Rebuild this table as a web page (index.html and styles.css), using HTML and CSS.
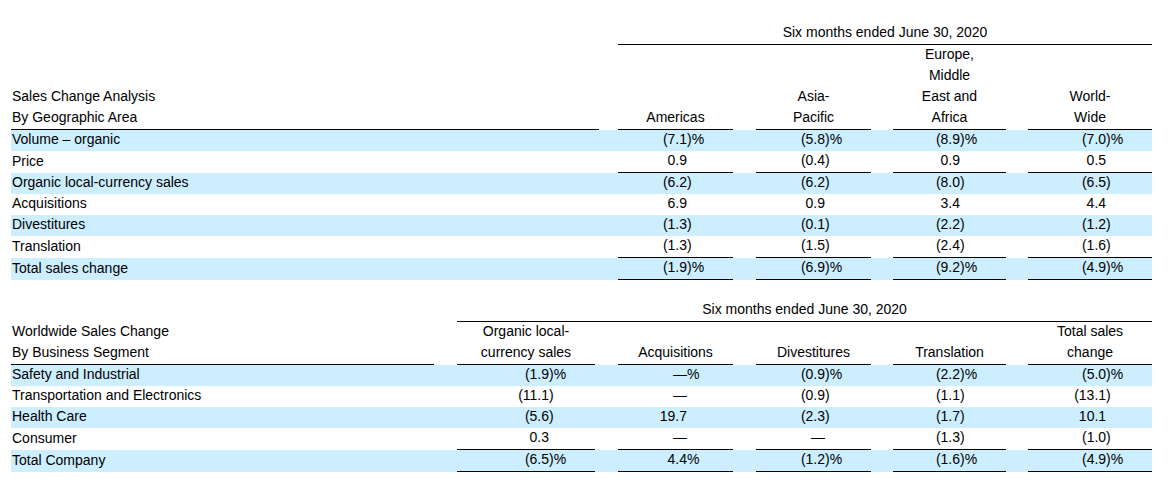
FILE: index.html
```html
<!DOCTYPE html>
<html lang="en">
<head>
<meta charset="utf-8">
<title>Sales Change Analysis</title>
<link rel="stylesheet" href="styles.css">
</head>
<body>
<div class="page">
  <table class="tbl t1">
    <colgroup>
      <col class="c-lab1"><col class="c-sp19"><col class="c-115"><col class="c-sp23"><col class="c-115"><col class="c-sp22"><col class="c-113"><col class="c-sp22"><col class="c-124">
    </colgroup>
    <tr>
      <td></td><td></td>
      <td colspan="7" class="title bb">Six months ended June 30, 2020</td>
    </tr>
    <tr>
      <td class="lab hdl bb"><div class="hx">Sales Change Analysis<br>By Geographic Area</div></td>
      <td></td>
      <td class="hd bb"><div class="hx">Americas</div></td>
      <td></td>
      <td class="hd bb"><div class="hx">Asia-<br>Pacific</div></td>
      <td></td>
      <td class="hd bb"><div class="hx">Europe,<br>Middle<br>East and<br>Africa</div></td>
      <td></td>
      <td class="hd bb"><div class="hx">World-<br>Wide</div></td>
    </tr>
    <tr class="hl">
      <td class="lab">Volume – organic</td><td></td>
      <td class="v"><span class="n">(7.1</span><span class="s">)%</span></td><td></td>
      <td class="v"><span class="n">(5.8</span><span class="s">)%</span></td><td></td>
      <td class="v"><span class="n">(8.9</span><span class="s">)%</span></td><td></td>
      <td class="v"><span class="n">(7.0</span><span class="s">)%</span></td>
    </tr>
    <tr>
      <td class="lab">Price</td><td></td>
      <td class="v bb"><span class="n">0.9</span><span class="s"></span></td><td></td>
      <td class="v bb"><span class="n">(0.4</span><span class="s">)</span></td><td></td>
      <td class="v bb"><span class="n">0.9</span><span class="s"></span></td><td></td>
      <td class="v bb"><span class="n">0.5</span><span class="s"></span></td>
    </tr>
    <tr class="hl">
      <td class="lab">Organic local-currency sales</td><td></td>
      <td class="v"><span class="n">(6.2</span><span class="s">)</span></td><td></td>
      <td class="v"><span class="n">(6.2</span><span class="s">)</span></td><td></td>
      <td class="v"><span class="n">(8.0</span><span class="s">)</span></td><td></td>
      <td class="v"><span class="n">(6.5</span><span class="s">)</span></td>
    </tr>
    <tr>
      <td class="lab">Acquisitions</td><td></td>
      <td class="v"><span class="n">6.9</span><span class="s"></span></td><td></td>
      <td class="v"><span class="n">0.9</span><span class="s"></span></td><td></td>
      <td class="v"><span class="n">3.4</span><span class="s"></span></td><td></td>
      <td class="v"><span class="n">4.4</span><span class="s"></span></td>
    </tr>
    <tr class="hl">
      <td class="lab">Divestitures</td><td></td>
      <td class="v"><span class="n">(1.3</span><span class="s">)</span></td><td></td>
      <td class="v"><span class="n">(0.1</span><span class="s">)</span></td><td></td>
      <td class="v"><span class="n">(2.2</span><span class="s">)</span></td><td></td>
      <td class="v"><span class="n">(1.2</span><span class="s">)</span></td>
    </tr>
    <tr>
      <td class="lab">Translation</td><td></td>
      <td class="v bb"><span class="n">(1.3</span><span class="s">)</span></td><td></td>
      <td class="v bb"><span class="n">(1.5</span><span class="s">)</span></td><td></td>
      <td class="v bb"><span class="n">(2.4</span><span class="s">)</span></td><td></td>
      <td class="v bb"><span class="n">(1.6</span><span class="s">)</span></td>
    </tr>
    <tr class="hl">
      <td class="lab">Total sales change</td><td></td>
      <td class="v bb"><span class="n">(1.9</span><span class="s">)%</span></td><td></td>
      <td class="v bb"><span class="n">(6.9</span><span class="s">)%</span></td><td></td>
      <td class="v bb"><span class="n">(9.2</span><span class="s">)%</span></td><td></td>
      <td class="v bb"><span class="n">(4.9</span><span class="s">)%</span></td>
    </tr>
  </table>

  <table class="tbl t2">
    <colgroup>
      <col class="c-lab2"><col class="c-sp23"><col class="c-138"><col class="c-sp23"><col class="c-115"><col class="c-sp23"><col class="c-115"><col class="c-sp22"><col class="c-113"><col class="c-sp22"><col class="c-124">
    </colgroup>
    <tr>
      <td></td><td></td>
      <td colspan="9" class="title bb">Six months ended June 30, 2020</td>
    </tr>
    <tr>
      <td class="lab hdl bb"><div class="hx">Worldwide Sales Change<br>By Business Segment</div></td>
      <td></td>
      <td class="hd bb"><div class="hx">Organic local-<br>currency sales</div></td>
      <td></td>
      <td class="hd bb"><div class="hx">Acquisitions</div></td>
      <td></td>
      <td class="hd bb"><div class="hx">Divestitures</div></td>
      <td></td>
      <td class="hd bb"><div class="hx">Translation</div></td>
      <td></td>
      <td class="hd bb"><div class="hx">Total sales<br>change</div></td>
    </tr>
    <tr class="hl">
      <td class="lab">Safety and Industrial</td><td></td>
      <td class="v"><span class="n">(1.9</span><span class="s">)%</span></td><td></td>
      <td class="v"><span class="n">—</span><span class="s">%</span></td><td></td>
      <td class="v"><span class="n">(0.9</span><span class="s">)%</span></td><td></td>
      <td class="v"><span class="n">(2.2</span><span class="s">)%</span></td><td></td>
      <td class="v"><span class="n">(5.0</span><span class="s">)%</span></td>
    </tr>
    <tr>
      <td class="lab">Transportation and Electronics</td><td></td>
      <td class="v"><span class="n">(11.1</span><span class="s">)</span></td><td></td>
      <td class="v"><span class="n">—</span><span class="s"></span></td><td></td>
      <td class="v"><span class="n">(0.9</span><span class="s">)</span></td><td></td>
      <td class="v"><span class="n">(1.1</span><span class="s">)</span></td><td></td>
      <td class="v"><span class="n">(13.1</span><span class="s">)</span></td>
    </tr>
    <tr class="hl">
      <td class="lab">Health Care</td><td></td>
      <td class="v"><span class="n">(5.6</span><span class="s">)</span></td><td></td>
      <td class="v"><span class="n">19.7</span><span class="s"></span></td><td></td>
      <td class="v"><span class="n">(2.3</span><span class="s">)</span></td><td></td>
      <td class="v"><span class="n">(1.7</span><span class="s">)</span></td><td></td>
      <td class="v"><span class="n">10.1</span><span class="s"></span></td>
    </tr>
    <tr>
      <td class="lab">Consumer</td><td></td>
      <td class="v bb"><span class="n">0.3</span><span class="s"></span></td><td></td>
      <td class="v bb"><span class="n">—</span><span class="s"></span></td><td></td>
      <td class="v bb"><span class="n">—</span><span class="s"></span></td><td></td>
      <td class="v bb"><span class="n">(1.3</span><span class="s">)</span></td><td></td>
      <td class="v bb"><span class="n">(1.0</span><span class="s">)</span></td>
    </tr>
    <tr class="hl">
      <td class="lab">Total Company</td><td></td>
      <td class="v bb"><span class="n">(6.5</span><span class="s">)%</span></td><td></td>
      <td class="v bb"><span class="n">4.4</span><span class="s">%</span></td><td></td>
      <td class="v bb"><span class="n">(1.2</span><span class="s">)%</span></td><td></td>
      <td class="v bb"><span class="n">(1.6</span><span class="s">)%</span></td><td></td>
      <td class="v bb"><span class="n">(4.9</span><span class="s">)%</span></td>
    </tr>
  </table>
</div>
</body>
</html>
```
FILE: styles.css
```css
body {
  margin: 0;
  background: #ffffff;
  color: #000000;
  font-family: "Liberation Sans", Arial, sans-serif;
  font-size: 14px;
}

.page {
  padding: 23px 0 0 11px;
}

.tbl {
  border-collapse: separate;
  border-spacing: 0;
  table-layout: fixed;
  width: 1141px;
}

.t2 {
  margin-top: 20px;
}

.tbl td {
  padding: 0 0 2px;
  line-height: 19px;
  white-space: nowrap;
  vertical-align: middle;
}

.c-lab1 { width: 588px; }
.c-lab2 { width: 423px; }
.c-sp19 { width: 19px; }
.c-sp22 { width: 22px; }
.c-sp23 { width: 23px; }
.c-113 { width: 113px; }
.c-115 { width: 115px; }
.c-124 { width: 124px; }
.c-138 { width: 138px; }

.tbl tr.hl td {
  background: #cceeff;
}

.tbl td.bb {
  border-bottom: 1px solid #000000;
}

.tbl td.lab {
  padding-left: 1px;
}

.tbl td.hdl,
.tbl td.hd {
  padding-bottom: 0;
  line-height: 21px;
  vertical-align: bottom;
}

.tbl td.hd {
  text-align: center;
}

.hx {
  margin: -1px 0 1px;
}

.tbl td.title {
  text-align: center;
}

.tbl td.v {
  text-align: right;
}

.v .s {
  display: inline-block;
  width: 46px;
  text-align: left;
}
```
